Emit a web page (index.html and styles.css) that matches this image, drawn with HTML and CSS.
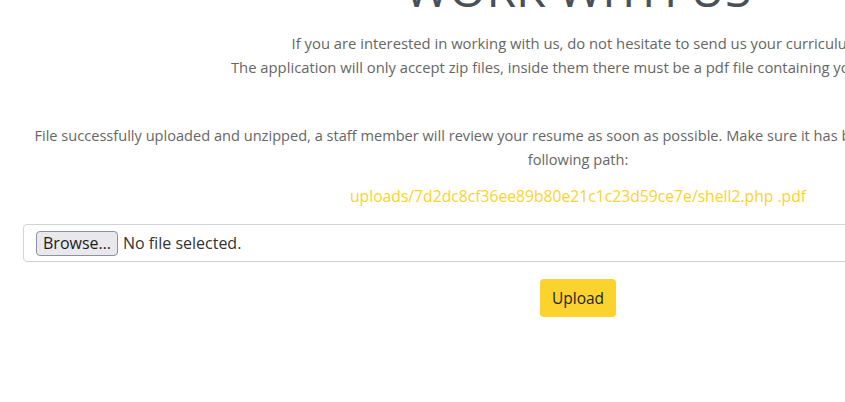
FILE: index.html
```html
<!DOCTYPE html>
<html lang="en">
<head>
<meta charset="utf-8">
<title>Work with us</title>
<link rel="stylesheet" href="styles.css">
</head>
<body>
<section class="page">
  <div class="container">
    <h2 class="title">WORK WITH US</h2>
    <p class="lead">If you are interested in working with us, do not hesitate to send us your curriculum.<br>The application will only accept zip files, inside them there must be a pdf file containing your resume.</p>
    <p class="result">File successfully uploaded and unzipped, a staff member will review your resume as soon as possible. Make sure it has been uploaded correctly by accessing the<br>following path:</p>
    <p class="path"><a href="#" class="path-link">uploads/7d2dc8cf36ee89b80e21c1c23d59ce7e/shell2.php .pdf</a></p>
    <form class="upload-form">
      <div class="file-box">
        <span class="browse">Browse…</span>
        <span class="file-name">No file selected.</span>
      </div>
      <div class="actions">
        <button type="button" class="btn-upload">Upload</button>
      </div>
    </form>
  </div>
</section>
</body>
</html>
```

FILE: styles.css
```css
html, body {
  margin: 0;
  padding: 0;
  overflow: hidden;
  background: #ffffff;
}

body {
  width: 1156px;
  font-family: "Open Sans", "Noto Sans", sans-serif;
  font-size: 14.8px;
  line-height: 24px;
  color: #666666;
}

.container {
  width: 1110px;
  margin: 0 auto;
  padding: 0 15px;
  box-sizing: content-box;
  text-align: center;
}

.title {
  margin: -40px 0 0;
  font-size: 48px;
  line-height: 58px;
  font-weight: 500;
  color: #495057;
}

.lead {
  margin: 13px 0 0;
}

.result {
  margin: 44px 0 0;
  font-size: 14.6px;
}

.path {
  margin: 13px 0 0;
  font-size: 15.7px;
}

.path-link {
  color: #fcd22e;
  text-decoration: none;
}

.upload-form {
  margin-top: 16px;
  text-align: left;
}

.file-box {
  display: flex;
  align-items: center;
  gap: 5px;
  height: 38px;
  box-sizing: border-box;
  border: 1px solid #ced4da;
  border-radius: 4px;
  padding: 0 12px;
  font-size: 16px;
}

.browse {
  display: inline-flex;
  align-items: center;
  height: 25px;
  padding: 0 6px;
  box-sizing: border-box;
  background: #e9e9ed;
  border: 1px solid #8f8f9d;
  border-radius: 4px;
  color: #1b1b1b;
}

.file-name {
  color: #333333;
}

.actions {
  display: flex;
  justify-content: center;
  margin-top: 17px;
}

.btn-upload {
  height: 38px;
  padding: 0 12px;
  border: none;
  border-radius: 4px;
  background: #fcd22e;
  color: #212529;
  font-family: inherit;
  font-size: 15.5px;
}
```
